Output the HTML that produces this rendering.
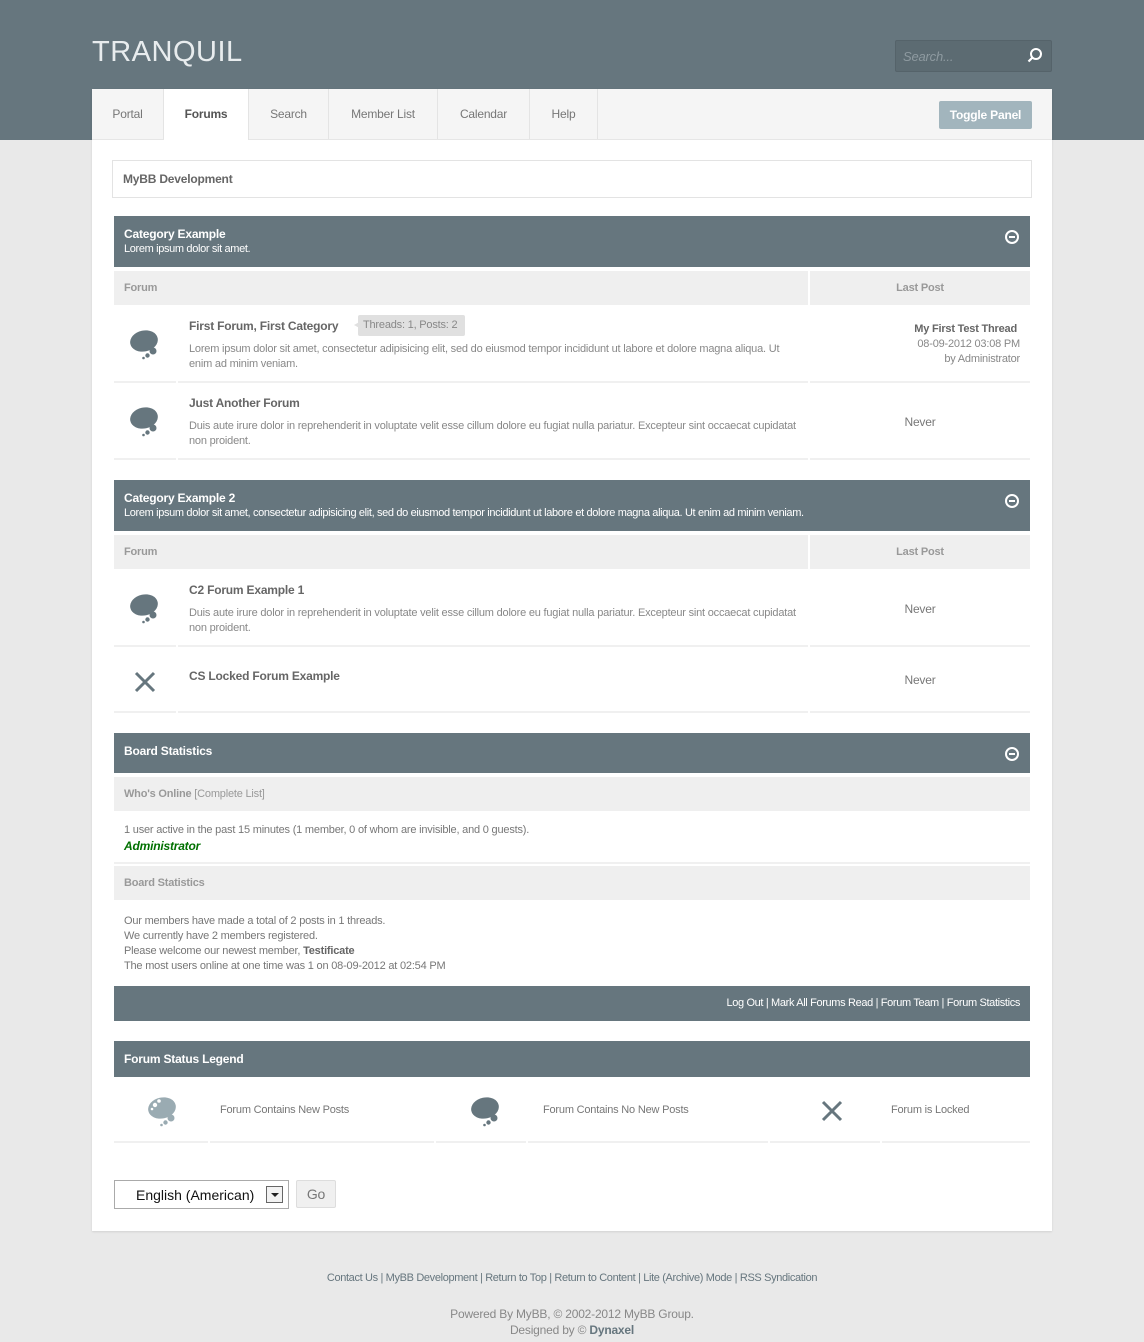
<!DOCTYPE html>
<html><head><meta charset="utf-8"><style>
*{margin:0;padding:0;box-sizing:border-box}
body{width:1144px;height:1342px;background:#e9e9e9;font-family:"Liberation Sans",Arial,sans-serif;color:#777;position:relative;overflow:hidden;letter-spacing:-0.2px}
.a{position:absolute}
.hdr{left:0;top:0;width:1144px;height:140px;background:#66767e}
.logo{left:92px;top:36px;font-size:29px;color:#e8ecee;letter-spacing:0.5px;font-weight:normal}
.search{left:895px;top:40px;width:157px;height:32px;background:#5c6b72;border:1px solid #55636a;border-radius:2px}
.search span{position:absolute;left:7px;top:8px;font-style:italic;color:#8e9aa0;font-size:13px}
.wrap{left:92px;top:89px;width:960px;height:1142px;background:#fff;box-shadow:0 1px 2px rgba(0,0,0,.1)}
.nav{left:92px;top:89px;width:960px;height:51px;background:#f5f5f5;border-bottom:1px solid #e6e6e6}
.tab{position:absolute;top:0;height:50px;line-height:51px;text-align:center;font-size:12px;color:#777;border-right:1px solid #e4e4e4}
.tab.on{background:#fff;color:#555;font-weight:bold;height:51px}
.toggle{left:939px;top:101px;width:93px;height:28px;background:#a2b5bd;color:#fff;font-weight:bold;font-size:12px;line-height:28px;text-align:center;border-radius:2px}
.bc{left:112px;top:160px;width:920px;height:38px;border:1px solid #e3e3e3;font-size:12px;font-weight:bold;color:#666;padding:11px 0 0 10px}
.cat{left:114px;width:916px;background:#66767e;color:#fff}
.cat b{position:absolute;left:10px;font-size:12px}
.cat i{position:absolute;left:10px;font-style:normal;font-size:11px;letter-spacing:-0.35px}
.th{background:#efefef;font-size:11px;font-weight:bold;color:#999;height:34px;line-height:34px}
.t{font-size:12px;font-weight:bold;color:#666}
.d{font-size:11px;color:#888;line-height:15px}
.ln{height:2px;background:#f0f0f0}
.min{width:14px;height:14px;border:2px solid #fff;border-radius:50%}
.min:after{content:"";position:absolute;left:2px;top:4px;width:6px;height:2px;background:#fff}
.s{font-size:11px;color:#777}
</style></head><body>
<div class="a hdr"></div>
<div class="a logo">TRANQUIL</div>
<div class="a search"><span>Search...</span>
<svg class="a" style="left:130px;top:6px" width="18" height="18" viewBox="0 0 18 18"><circle cx="10" cy="7" r="5" fill="none" stroke="#fff" stroke-width="2"/><line x1="6.5" y1="10.5" x2="2.5" y2="14.5" stroke="#fff" stroke-width="2.2"/></svg></div>
<div class="a wrap"></div>
<div class="a nav">
<div class="tab" style="left:0;width:72px">Portal</div>
<div class="tab on" style="left:72px;width:85px">Forums</div>
<div class="tab" style="left:157px;width:80px">Search</div>
<div class="tab" style="left:237px;width:109px">Member List</div>
<div class="tab" style="left:346px;width:92px">Calendar</div>
<div class="tab" style="left:438px;width:68px">Help</div>
</div>
<div class="a toggle">Toggle Panel</div>
<div class="a bc">MyBB Development</div>

<div class="a cat" style="top:216px;height:51px"><b style="top:11px">Category Example</b><i style="top:27px">Lorem ipsum dolor sit amet.</i><div class="a min" style="left:891px;top:14px"></div></div>
<div class="a th" style="left:114px;top:271px;width:694px;padding-left:10px">Forum</div>
<div class="a th" style="left:810px;top:271px;width:220px;text-align:center">Last Post</div>

<svg class="a" style="left:125px;top:323px" width="40" height="40" viewBox="125 323 40 40"><ellipse cx="144" cy="341" rx="14" ry="10.5" transform="rotate(-12 144 341)" fill="#66767e"/><circle cx="153" cy="351" r="3.5" fill="#66767e"/><circle cx="147.5" cy="355.5" r="2.2" fill="#66767e"/><circle cx="143.5" cy="358" r="1.3" fill="#66767e"/></svg>
<div class="a t" style="left:189px;top:319px">First Forum, First Category</div>
<div class="a" style="left:349px;top:320px;width:0;height:0;border:5px solid transparent;border-right:9px solid #e0e0e0"></div>
<div class="a" style="left:358px;top:315px;width:107px;height:21px;background:#e0e0e0;font-size:11px;color:#888;line-height:21px;padding-left:5px;border-radius:2px">Threads: 1, Posts: 2</div>
<div class="a d" style="left:189px;top:342px;width:610px">Lorem ipsum dolor sit amet, consectetur adipisicing elit, sed do eiusmod tempor incididunt ut labore et dolore magna aliqua. Ut enim ad minim veniam.</div>
<div class="a t" style="left:810px;top:323px;width:207px;text-align:right;font-size:11px">My First Test Thread</div>
<div class="a d" style="left:810px;top:337px;width:210px;text-align:right">08-09-2012 03:08 PM<br>by Administrator</div>
<div class="a ln" style="left:114px;top:381px;width:62px"></div><div class="a ln" style="left:178px;top:381px;width:630px"></div><div class="a ln" style="left:810px;top:381px;width:220px"></div>

<svg class="a" style="left:125px;top:400px" width="40" height="40" viewBox="125 323 40 40"><ellipse cx="144" cy="341" rx="14" ry="10.5" transform="rotate(-12 144 341)" fill="#66767e"/><circle cx="153" cy="351" r="3.5" fill="#66767e"/><circle cx="147.5" cy="355.5" r="2.2" fill="#66767e"/><circle cx="143.5" cy="358" r="1.3" fill="#66767e"/></svg>
<div class="a t" style="left:189px;top:396px">Just Another Forum</div>
<div class="a d" style="left:189px;top:419px;width:610px">Duis aute irure dolor in reprehenderit in voluptate velit esse cillum dolore eu fugiat nulla pariatur. Excepteur sint occaecat cupidatat non proident.</div>
<div class="a" style="left:810px;top:415px;width:220px;text-align:center;font-size:12px;color:#777">Never</div>
<div class="a ln" style="left:114px;top:458px;width:62px"></div><div class="a ln" style="left:178px;top:458px;width:630px"></div><div class="a ln" style="left:810px;top:458px;width:220px"></div>

<div class="a cat" style="top:480px;height:51px"><b style="top:11px">Category Example 2</b><i style="top:27px">Lorem ipsum dolor sit amet, consectetur adipisicing elit, sed do eiusmod tempor incididunt ut labore et dolore magna aliqua. Ut enim ad minim veniam.</i><div class="a min" style="left:891px;top:14px"></div></div>
<div class="a th" style="left:114px;top:535px;width:694px;padding-left:10px">Forum</div>
<div class="a th" style="left:810px;top:535px;width:220px;text-align:center">Last Post</div>

<svg class="a" style="left:125px;top:587px" width="40" height="40" viewBox="125 323 40 40"><ellipse cx="144" cy="341" rx="14" ry="10.5" transform="rotate(-12 144 341)" fill="#66767e"/><circle cx="153" cy="351" r="3.5" fill="#66767e"/><circle cx="147.5" cy="355.5" r="2.2" fill="#66767e"/><circle cx="143.5" cy="358" r="1.3" fill="#66767e"/></svg>
<div class="a t" style="left:189px;top:583px">C2 Forum Example 1</div>
<div class="a d" style="left:189px;top:606px;width:610px">Duis aute irure dolor in reprehenderit in voluptate velit esse cillum dolore eu fugiat nulla pariatur. Excepteur sint occaecat cupidatat non proident.</div>
<div class="a" style="left:810px;top:602px;width:220px;text-align:center;font-size:12px">Never</div>
<div class="a ln" style="left:114px;top:645px;width:62px"></div><div class="a ln" style="left:178px;top:645px;width:630px"></div><div class="a ln" style="left:810px;top:645px;width:220px"></div>

<svg class="a" style="left:133px;top:670px" width="24" height="24" viewBox="0 0 24 24"><path d="M3 3L21 21M21 3L3 21" stroke="#66767e" stroke-width="3"/></svg>
<div class="a t" style="left:189px;top:669px">CS Locked Forum Example</div>
<div class="a" style="left:810px;top:673px;width:220px;text-align:center;font-size:12px">Never</div>
<div class="a ln" style="left:114px;top:711px;width:62px"></div><div class="a ln" style="left:178px;top:711px;width:630px"></div><div class="a ln" style="left:810px;top:711px;width:220px"></div>

<div class="a cat" style="top:733px;height:40px"><b style="top:11px">Board Statistics</b><div class="a min" style="left:891px;top:14px"></div></div>
<div class="a th" style="left:114px;top:777px;width:916px;padding-left:10px">Who's Online <span style="font-weight:normal">[Complete List]</span></div>
<div class="a s" style="left:124px;top:824px">1 user active in the past 15 minutes (1 member, 0 of whom are invisible, and 0 guests).</div>
<div class="a" style="left:124px;top:839px;font-size:12px;font-weight:bold;font-style:italic;color:#007000">Administrator</div>
<div class="a ln" style="left:114px;top:862px;width:916px"></div>
<div class="a th" style="left:114px;top:866px;width:916px;padding-left:10px">Board Statistics</div>
<div class="a s" style="left:124px;top:914px;line-height:15px">Our members have made a total of 2 posts in 1 threads.<br>We currently have 2 members registered.<br>Please welcome our newest member, <b style="color:#666">Testificate</b><br>The most users online at one time was 1 on 08-09-2012 at 02:54 PM</div>
<div class="a cat" style="top:986px;height:35px"><div class="a" style="right:10px;top:11px;font-size:11px;color:#fff;letter-spacing:-0.35px">Log Out | Mark All Forums Read | Forum Team | Forum Statistics</div></div>

<div class="a cat" style="top:1041px;height:36px"><b style="top:11px">Forum Status Legend</b></div>
<svg class="a" style="left:143px;top:1090px" width="40" height="40" viewBox="125 323 40 40"><ellipse cx="144" cy="341" rx="14" ry="10.5" transform="rotate(-12 144 341)" fill="#9aabb2"/><circle cx="153" cy="351" r="3.5" fill="#9aabb2"/><circle cx="147.5" cy="355.5" r="2.2" fill="#9aabb2"/><circle cx="143.5" cy="358" r="1.3" fill="#9aabb2"/><circle cx="137" cy="338" r="2.2" fill="#fff"/><circle cx="141" cy="334" r="1.8" fill="#fff"/><circle cx="134" cy="342" r="1.3" fill="#fff"/></svg>
<div class="a s" style="left:220px;top:1104px">Forum Contains New Posts</div>
<svg class="a" style="left:466px;top:1090px" width="40" height="40" viewBox="125 323 40 40"><ellipse cx="144" cy="341" rx="14" ry="10.5" transform="rotate(-12 144 341)" fill="#66767e"/><circle cx="153" cy="351" r="3.5" fill="#66767e"/><circle cx="147.5" cy="355.5" r="2.2" fill="#66767e"/><circle cx="143.5" cy="358" r="1.3" fill="#66767e"/></svg>
<div class="a s" style="left:543px;top:1104px">Forum Contains No New Posts</div>
<svg class="a" style="left:820px;top:1099px" width="24" height="24" viewBox="0 0 24 24"><path d="M3 3L21 21M21 3L3 21" stroke="#66767e" stroke-width="3"/></svg>
<div class="a s" style="left:891px;top:1104px">Forum is Locked</div>
<div class="a ln" style="left:114px;top:1141px;width:94px"></div><div class="a ln" style="left:210px;top:1141px;width:224px"></div><div class="a ln" style="left:436px;top:1141px;width:90px"></div><div class="a ln" style="left:528px;top:1141px;width:240px"></div><div class="a ln" style="left:770px;top:1141px;width:110px"></div><div class="a ln" style="left:882px;top:1141px;width:148px"></div>

<div class="a" style="left:114px;top:1180px;width:175px;height:29px;border:1px solid #aaa;font-size:14px;color:#111;padding:6px 0 0 21px;letter-spacing:0">English (American)
<div class="a" style="left:151px;top:5px;width:17px;height:17px;border:1px solid #666;background:#f2f2f2"><div class="a" style="left:4px;top:6px;border:4px solid transparent;border-top:4px solid #222;width:0;height:0"></div></div></div>
<div class="a" style="left:296px;top:1180px;width:40px;height:28px;background:#f0f0f0;border:1px solid #ddd;font-size:14px;color:#777;text-align:center;line-height:27px;border-radius:2px">Go</div>

<div class="a" style="left:0;top:1272px;width:1144px;text-align:center;font-size:11px;color:#66767e;letter-spacing:-0.35px">Contact Us | MyBB Development | Return to Top | Return to Content | Lite (Archive) Mode | RSS Syndication</div>
<div class="a" style="left:0;top:1306px;width:1144px;text-align:center;font-size:12px;color:#888;line-height:16px">Powered By MyBB, © 2002-2012 MyBB Group.<br>Designed by © <b style="color:#66767e">Dynaxel</b></div>
</body></html>
